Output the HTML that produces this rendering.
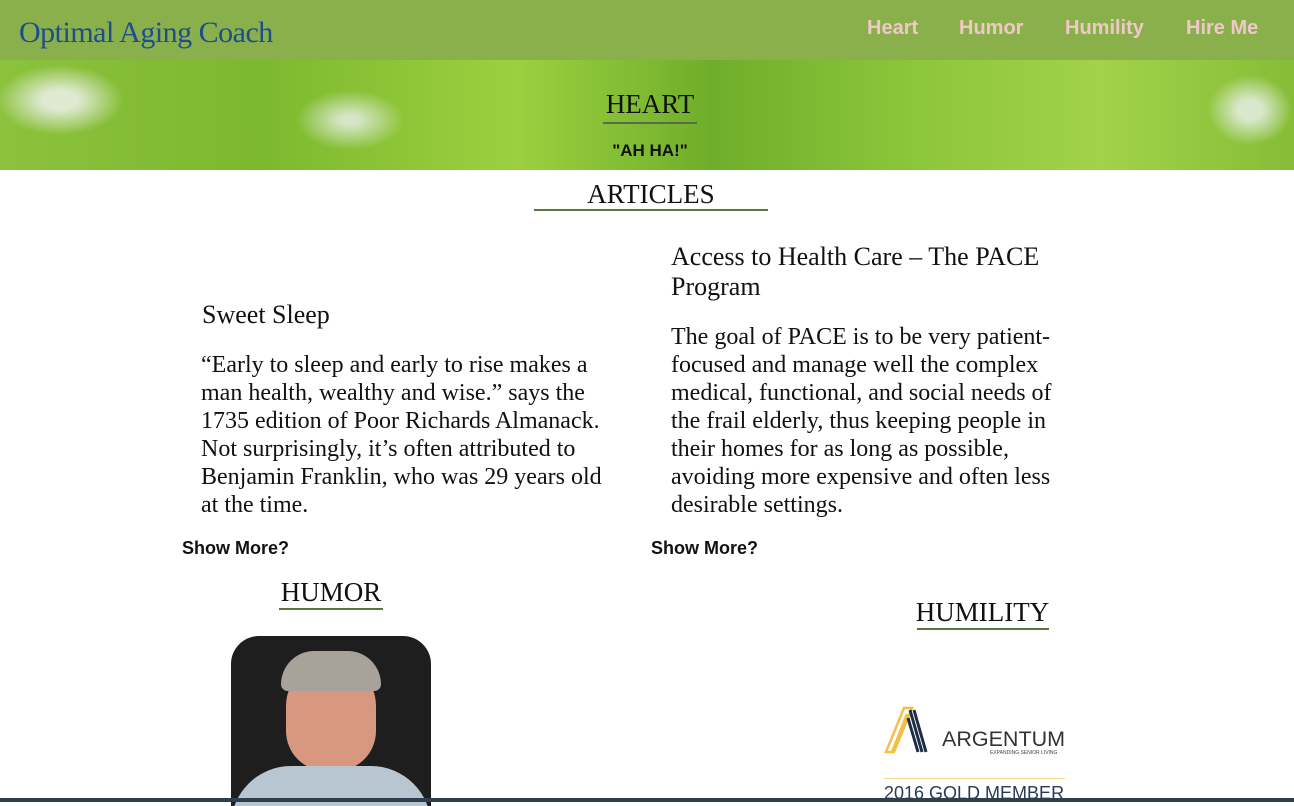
<!DOCTYPE html>
<html><head><meta charset="utf-8"><style>
*{margin:0;padding:0;box-sizing:border-box}
body{width:1294px;height:802px;overflow:hidden;background:#fff;position:relative;font-family:"Liberation Serif",serif;color:#111}
.abs{position:absolute}
.hdr{left:0;top:0;width:1294px;height:60px;background:#8ab04c}
.logo{left:19px;top:16px;font-size:30px;color:#1d4d8f;letter-spacing:-0.5px}
.nav{top:17px;font-family:"Liberation Sans",sans-serif;font-weight:bold;font-size:20px;color:#f0c8c8}
.ban{left:0;top:60px;width:1294px;height:110px;background:
radial-gradient(ellipse 90px 50px at 60px 40px,#dfe9d2 20%,transparent 70%),
radial-gradient(ellipse 60px 50px at 1250px 50px,#d8e8cc 20%,transparent 70%),
radial-gradient(ellipse 90px 50px at 350px 60px,#d5e5c5 10%,transparent 60%),
linear-gradient(90deg,#8cc23c 0%,#7cb82e 20%,#9cd040 40%,#6fae2a 55%,#8bc53a 70%,#a2d24a 85%,#86bd36 100%)}
.h2{font-size:27px;text-align:center;line-height:1}
.ul{height:2px;background:#5a7442}
.t{font-size:26px;line-height:30px}
.p{font-size:24px;line-height:28px}
.sm{font-family:"Liberation Sans",sans-serif;font-weight:bold;font-size:18px}
</style></head><body>
<div class="abs hdr"></div>
<div class="abs logo">Optimal Aging Coach</div>
<div class="abs nav" style="left:867px">Heart</div>
<div class="abs nav" style="left:959px">Humor</div>
<div class="abs nav" style="left:1065px">Humility</div>
<div class="abs nav" style="left:1186px">Hire Me</div>
<div class="abs ban"></div>
<div class="abs h2" style="left:590px;top:91px;width:120px">HEART</div>
<div class="abs" style="left:603px;top:122px;width:94px;height:2px;background:#5a6a50"></div>
<div class="abs sm" style="left:600px;top:141px;width:100px;text-align:center;font-size:17px">"AH HA!"</div>
<div class="abs h2" style="left:535px;top:181px;width:232px">ARTICLES</div>
<div class="abs ul" style="left:534px;top:209px;width:234px"></div>
<div class="abs t" style="left:202px;top:300px">Sweet Sleep</div>
<div class="abs p" style="left:201px;top:351px;width:420px">“Early to sleep and early to rise makes a man health, wealthy and wise.” says the 1735 edition of Poor Richards Almanack. Not surprisingly, it’s often attributed to Benjamin Franklin, who was 29 years old at the time.</div>
<div class="abs t" style="left:671px;top:242px;width:440px">Access to Health Care – The PACE Program</div>
<div class="abs p" style="left:671px;top:323px;width:405px">The goal of PACE is to be very patient-focused and manage well the complex medical, functional, and social needs of the frail elderly, thus keeping people in their homes for as long as possible, avoiding more expensive and often less desirable settings.</div>
<div class="abs sm" style="left:182px;top:538px">Show More?</div>
<div class="abs sm" style="left:651px;top:538px">Show More?</div>
<div class="abs h2" style="left:278px;top:579px;width:106px">HUMOR</div>
<div class="abs ul" style="left:279px;top:608px;width:104px"></div>
<div class="abs h2" style="left:915px;top:599px;width:135px">HUMILITY</div>
<div class="abs ul" style="left:917px;top:628px;width:132px"></div>
<div class="abs" style="left:231px;top:636px;width:200px;height:170px;border-radius:28px 28px 0 0;background:#1e1e1e;overflow:hidden">
<div class="abs" style="left:55px;top:25px;width:90px;height:110px;border-radius:45px 45px 40px 40px;background:#d89880"></div>
<div class="abs" style="left:50px;top:15px;width:100px;height:40px;border-radius:50px 50px 10px 10px;background:#a8a29a"></div>
<div class="abs" style="left:0;top:130px;width:200px;height:60px;border-radius:60px 60px 0 0;background:#b8c6d2"></div>
</div>
<svg class="abs" style="left:884px;top:706px" width="50" height="48" viewBox="0 0 50 48">
<path d="M2 46 L20 2 L28 2 L10 46Z M8 46 L23 8" fill="none" stroke="#f5bf45" stroke-width="2.5"/>
<path d="M24 12 L34 46 M30 4 L42 46 M26 4 L38 46" stroke="#1d2d45" stroke-width="3"/>
</svg>
<div class="abs" style="left:942px;top:727px;font-family:'Liberation Sans',sans-serif;font-size:21.5px;color:#333">ARGENTUM</div>
<div class="abs" style="left:990px;top:750px;font-family:'Liberation Sans',sans-serif;font-size:5px;color:#444">EXPANDING SENIOR LIVING</div>
<div class="abs" style="left:884px;top:778px;width:181px;height:1px;background:#f5d590"></div>
<div class="abs" style="left:884px;top:783px;font-family:'Liberation Sans',sans-serif;font-size:18px;color:#2a3a55">2016 GOLD MEMBER</div>
<div class="abs" style="left:0;top:798px;width:1294px;height:4px;background:#2d3e50"></div>
</body></html>
